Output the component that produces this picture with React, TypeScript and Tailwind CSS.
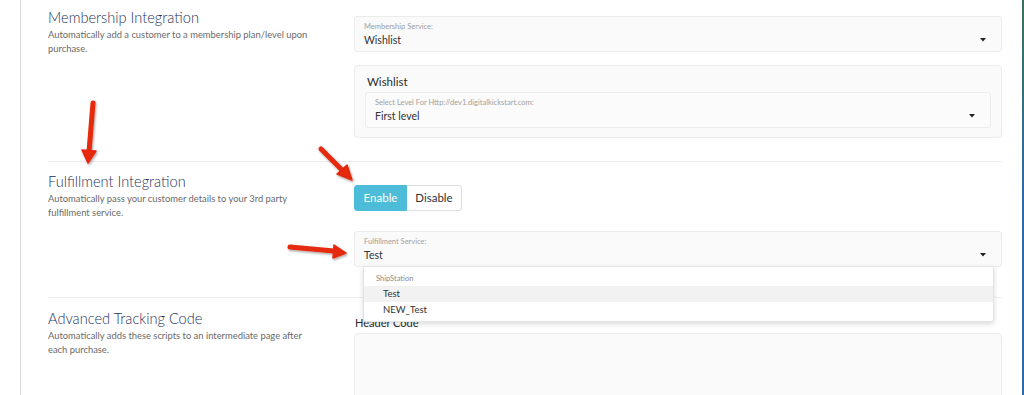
import { useState } from 'react'

function Caret() {
  return (
    <svg width="6" height="4" viewBox="0 0 6 4" className="shrink-0">
      <path d="M0 0 H6 L3 3.5 Z" fill="#222" />
    </svg>
  )
}

interface FieldSelectProps {
  label: string
  value: string
  className?: string
}

function FieldSelect({ label, value, className = '' }: FieldSelectProps) {
  return (
    <div
      className={`relative h-[36px] rounded-[3px] border border-[#ececec] bg-[#fafafa] pl-[9px] pr-[15px] ${className}`}
    >
      <div className="pt-[5px] text-[7.5px] leading-[10px] text-[#a0a0a0]">{label}</div>
      <div className="flex items-center justify-between">
        <span className="text-[10.5px] leading-[16px] text-[#333]">{value}</span>
        <Caret />
      </div>
    </div>
  )
}

interface SectionHeadProps {
  title: string
  lines: string[]
  className?: string
}

function SectionHead({ title, lines, className = '' }: SectionHeadProps) {
  return (
    <div className={`w-[306px] shrink-0 ${className}`}>
      <h2 className="text-[14.6px] font-light leading-[20px] text-[#27315a]">{title}</h2>
      {lines.map((l) => (
        <p key={l} className="text-[9.4px] leading-[14px] text-[#6a6a6a]">
          {l}
        </p>
      ))}
    </div>
  )
}

function Arrows() {
  return (
    <svg
      className="pointer-events-none absolute left-0 top-0"
      width="1024"
      height="395"
      viewBox="0 0 1024 395"
    >
      <defs>
        <filter id="sh" x="-50%" y="-50%" width="200%" height="200%">
          <feDropShadow dx="1" dy="1.5" stdDeviation="1.2" floodColor="#000" floodOpacity="0.35" />
        </filter>
      </defs>
      <g fill="#e5290f" stroke="#e5290f" strokeLinecap="round" strokeLinejoin="round" filter="url(#sh)">
        <line x1="93" y1="103" x2="89" y2="152" strokeWidth="5" />
        <path d="M82 150 L96 151 L88 163 Z" strokeWidth="1.5" />
        <line x1="321" y1="149" x2="343" y2="171" strokeWidth="5" />
        <path d="M337 174 L347 165 L352 180 Z" strokeWidth="1.5" />
        <line x1="290" y1="247" x2="334" y2="251" strokeWidth="5" />
        <path d="M334 245 L333 258 L346 253 Z" strokeWidth="1.5" />
      </g>
    </svg>
  )
}

export default function App() {
  const [enabled, setEnabled] = useState(true)

  return (
    <div
      className="relative flex h-[395px] w-[1024px] overflow-hidden bg-white"
      style={{ fontFamily: 'Lato, "Noto Sans", sans-serif' }}
    >
      <div className="w-[20px] shrink-0 bg-white" />
      <div className="flex-1 border-l border-[#dadada] pl-[27px] pr-[20px]">
        {/* Membership */}
        <div className="flex border-b border-[#ececec] pb-[23px]">
          <SectionHead
            title="Membership Integration"
            lines={['Automatically add a customer to a membership plan/level upon', 'purchase.']}
            className="pt-[8px]"
          />
          <div className="flex flex-1 flex-col gap-[13px] pt-[16px]">
            <FieldSelect label="Membership Service:" value="Wishlist" />
            <div className="h-[73px] rounded-[4px] border border-[#ececec] bg-[#fafafa] px-[10px]">
              <div className="pl-[2px] pt-[8px] text-[11.5px] leading-[16px] text-[#2b2b2b]">Wishlist</div>
              <FieldSelect
                className="mt-[2px] bg-[#fbfbfb]"
                label="Select Level For Http://dev1.digitalkickstart.com:"
                value="First level"
              />
            </div>
          </div>
        </div>

        {/* Fulfillment */}
        <div className="flex border-b border-[#ececec] pb-[30px]">
          <SectionHead
            title="Fulfillment Integration"
            lines={['Automatically pass your customer details to your 3rd party', 'fulfillment service.']}
            className="pt-[10px]"
          />
          <div className="flex-1 pt-[23px]">
            <div className="flex">
              <button
                onClick={() => setEnabled(true)}
                className={`h-[26px] w-[53px] rounded-l-[3px] border text-[11.5px] ${
                  enabled ? 'border-[#4cbcd9] bg-[#4cbcd9] text-white' : 'border-[#dedede] bg-white text-[#333]'
                }`}
              >
                Enable
              </button>
              <button
                onClick={() => setEnabled(false)}
                className={`h-[26px] w-[55px] rounded-r-[3px] border border-l-0 text-[11.5px] ${
                  !enabled ? 'border-[#4cbcd9] bg-[#4cbcd9] text-white' : 'border-[#dedede] bg-white text-[#333]'
                }`}
              >
                Disable
              </button>
            </div>
            <div className="relative mt-[20px]">
              <FieldSelect label="Fulfillment Service:" value="Test" />
              <div className="absolute left-[9px] right-[8px] top-[35px] z-10 rounded-b-[3px] border border-[#e4e4e4] bg-white pb-[3px] shadow-[0_2px_5px_rgba(0,0,0,0.15)]">
                <div className="pl-[12px] pt-[5px] text-[7.5px] leading-[14px] text-[#8a8a8a]">ShipStation</div>
                <div className="h-[16px] bg-[#f2f2f2] pl-[19px] text-[9.5px] leading-[16px] text-[#333]">Test</div>
                <div className="h-[16px] pl-[19px] text-[9.5px] leading-[16px] text-[#333]">NEW_Test</div>
              </div>
            </div>
          </div>
        </div>

        {/* Tracking */}
        <div className="flex">
          <SectionHead
            title="Advanced Tracking Code"
            lines={['Automatically adds these scripts to an intermediate page after', 'each purchase.']}
            className="pt-[11px]"
          />
          <div className="flex-1 pt-[18px]">
            <div className="pl-[1px] text-[11px] leading-[14px] text-[#2b2b2b]">Header Code</div>
            <div className="mt-[3px] h-[80px] rounded-[4px] border border-[#ececec] bg-[#fafafa]" />
          </div>
        </div>
      </div>
      <div className="w-[2px] shrink-0 bg-gradient-to-b from-[#3c6f5a] via-[#2f6aa8] to-[#2f6aa8]" />
      <Arrows />
    </div>
  )
}
